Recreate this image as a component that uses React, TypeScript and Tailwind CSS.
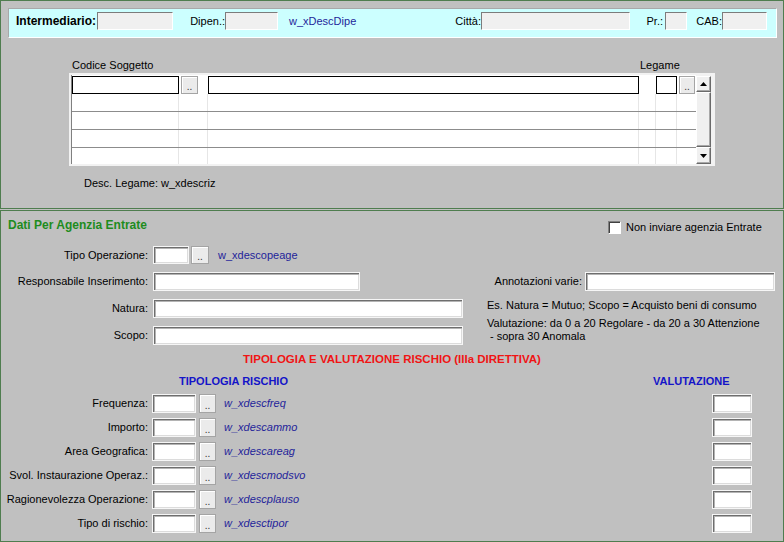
import React from 'react';

const sunken =
  'bg-white border border-[#f6f6f6] shadow-[inset_1px_1px_0_#6e6e6e,inset_2px_2px_0_#b4b4b4,inset_-1px_-1px_0_#dcdcdc]';
const flatInput =
  'h-[18px] bg-[#f0f0f0] border border-t-[#7c7c7c] border-l-[#7c7c7c] border-r-white border-b-white';
const raised =
  'bg-[#f0f0f0] border border-t-white border-l-white border-r-[#6a6a6a] border-b-[#6a6a6a] shadow-[inset_-1px_-1px_0_#a8a8a8]';

function Dots({ className }: { className: string }) {
  return (
    <div
      className={`flex items-end justify-center border border-[#a4a4a4] bg-[#ebebeb] shadow-[inset_1px_1px_0_#fff] pb-[3px] text-[10px] leading-[6px] text-[#333] ${className}`}
    >
      ..
    </div>
  );
}

function Arrow({ up }: { up?: boolean }) {
  return (
    <svg width="7" height="4" viewBox="0 0 7 4">
      <path d={up ? 'M3.5 0L7 4H0z' : 'M0 0h7L3.5 4z'} fill="#000" />
    </svg>
  );
}

const risks = [
  ['Frequenza:', 'w_xdescfreq'],
  ['Importo:', 'w_xdescammo'],
  ['Area Geografica:', 'w_xdescareag'],
  ['Svol. Instaurazione Operaz.:', 'w_xdescmodsvo'],
  ['Ragionevolezza Operazione:', 'w_xdescplauso'],
  ['Tipo di rischio:', 'w_xdesctipor'],
];

export default function App() {
  return (
    <div className="w-[784px] h-[542px] overflow-hidden bg-[#c0c0c0] flex flex-col font-['Liberation_Sans',Arial,sans-serif] text-[11px] leading-[13px] text-black">
      {/* testata intermediario + griglia soggetti */}
      <section className="h-[209px] shrink-0 border border-[#4f7d4f] pl-[7px] pr-[6px] pt-[7px]">
        <div className="h-[30px] flex items-start pt-[3px] pl-[7px] bg-[#ccffff] border border-t-[#a8a8a8] border-l-[#a8a8a8] border-r-white border-b-white">
          <span className="w-[81px] h-[18px] flex items-center font-bold text-[12px]">Intermediario:</span>
          <div className={`w-[76px] ${flatInput}`} />
          <span className="w-[52px] h-[18px] flex items-center justify-end">Dipen.:</span>
          <div className={`w-[53px] ${flatInput}`} />
          <div className="w-[203px] h-[18px] flex items-center justify-between pl-[11px]">
            <span className="text-[#1f1f9a]">w_xDescDipe</span>
            <span>Città:</span>
          </div>
          <div className={`w-[149px] ${flatInput}`} />
          <span className="w-[35px] h-[18px] flex items-center justify-end pr-[2px]">Pr.:</span>
          <div className={`w-[22px] ${flatInput}`} />
          <span className="w-[35px] h-[18px] flex items-center justify-end">CAB:</span>
          <div className={`w-[45px] ${flatInput}`} />
        </div>

        <div className="mt-[21px] h-[14px] flex">
          <span className="ml-[64px] w-[568px]">Codice Soggetto</span>
          <span>Legame</span>
        </div>

        <div className="ml-[61px] w-[646px] h-[93px] border-2 border-[#f2f2f2] bg-[#f2f2f2] flex">
          <div className="w-[625px] bg-white border-l border-[#808080] flex flex-col">
            <div className="h-[19px] pt-[1px] flex">
              <div className="w-[107px] h-[18px] border border-black" />
              <div className="w-[29px]">
                <Dots className="ml-[2px] w-[17px] h-[18px]" />
              </div>
              <div className="w-[431px] h-[18px] border border-black" />
              <div className="w-[17px]" />
              <div className="w-[21px] h-[18px] border border-black" />
              <div className="w-[19px]">
                <Dots className="ml-[2px] w-[16px] h-[18px]" />
              </div>
            </div>
            {[0, 1, 2, 3].map((r) => (
              <div
                key={r}
                className={`flex ${r < 3 ? 'h-[18px] border-b border-[#8c8c8c]' : 'h-[16px]'}`}
              >
                <div className="w-[107px] border-r border-[#e6e6e6]" />
                <div className="w-[29px] border-r border-[#e6e6e6]" />
                <div className="w-[431px] border-r border-[#e6e6e6]" />
                <div className="w-[17px] border-r border-[#e6e6e6]" />
                <div className="w-[21px] border-r border-[#e6e6e6]" />
                <div className="w-[19px]" />
              </div>
            ))}
          </div>
          <div className="w-[15px] mt-[1px] h-[88px] flex flex-col">
            <div className={`h-[16px] flex items-center justify-center ${raised}`}>
              <Arrow up />
            </div>
            <div className={`flex-1 ${raised}`} />
            <div className={`h-[17px] flex items-center justify-center ${raised}`}>
              <Arrow />
            </div>
          </div>
        </div>

        <div className="mt-[11px] ml-[76px]">Desc. Legame: w_xdescriz</div>
      </section>

      {/* dati per agenzia entrate */}
      <section className="mt-[1px] flex-1 border border-[#4f7d4f]">
        <div className="mt-[7px] h-[16px] flex items-start">
          <div className="w-[607px] pl-[7px] font-bold text-[12px] leading-[14px] text-[#1e8c1e]">
            Dati Per Agenzia Entrate
          </div>
          <div className="mt-[3px] flex items-center">
            <div className="w-[13px] h-[13px] bg-white border border-t-[#808080] border-l-[#808080] border-r-white border-b-white shadow-[inset_1px_1px_0_#404040]" />
            <span className="ml-[5px]">Non inviare agenzia Entrate</span>
          </div>
        </div>

        <div className="mt-[12px] h-[18px] flex items-center">
          <span className="w-[147px] text-right">Tipo Operazione:</span>
          <div className={`ml-[5px] w-[36px] h-[18px] ${sunken}`} />
          <Dots className="ml-[2px] w-[18px] h-[18px]" />
          <span className="ml-[9px] text-[#1f1f9a]">w_xdescopeage</span>
        </div>

        <div className="mt-[8px] flex">
          <div className="w-[462px] flex flex-col gap-[8px]">
            <div className="h-[19px] flex items-center">
              <span className="w-[147px] text-right">Responsabile Inserimento:</span>
              <div className={`ml-[5px] w-[207px] h-[19px] ${sunken}`} />
            </div>
            <div className="h-[19px] flex items-center">
              <span className="w-[147px] text-right">Natura:</span>
              <div className={`ml-[5px] w-[310px] h-[19px] ${sunken}`} />
            </div>
            <div className="h-[19px] flex items-center">
              <span className="w-[147px] text-right">Scopo:</span>
              <div className={`ml-[5px] w-[310px] h-[19px] ${sunken}`} />
            </div>
          </div>
          <div className="ml-[24px] flex flex-col">
            <div className="h-[19px] flex items-center">
              <span className="w-[95px] text-right">Annotazioni varie:</span>
              <div className={`ml-[3px] w-[190px] h-[19px] ${sunken}`} />
            </div>
            <div className="mt-[8px]">Es. Natura = Mutuo; Scopo = Acquisto beni di consumo</div>
            <div className="mt-[5px]">
              <div>Valutazione: da 0 a 20 Regolare - da 20 a 30 Attenzione</div>
              <div className="pl-[3px]">- sopra 30 Anomala</div>
            </div>
          </div>
        </div>

        <div className="mt-[7px] h-[14px] text-center font-bold text-[11.5px] leading-[14px] text-[#f01414]">
          TIPOLOGIA E VALUTAZIONE RISCHIO (IIIa DIRETTIVA)
        </div>

        <div className="mt-[8px] h-[14px] flex font-bold text-[11px] leading-[14px] text-[#1414c8]">
          <span className="ml-[178px] w-[474px]">TIPOLOGIA RISCHIO</span>
          <span>VALUTAZIONE</span>
        </div>

        <div className="mt-[6px] flex flex-col gap-[5px]">
          {risks.map(([label, desc]) => (
            <div key={label} className="h-[19px] flex items-center">
              <span className="w-[147px] text-right">{label}</span>
              <div className={`ml-[4px] w-[44px] h-[19px] ${sunken}`} />
              <Dots className="ml-[3px] w-[17px] h-[19px]" />
              <span className="ml-[8px] italic text-[#1f1f9a]">{desc}</span>
              <div className={`ml-auto mr-[31px] w-[40px] h-[19px] ${sunken}`} />
            </div>
          ))}
        </div>
      </section>
    </div>
  );
}
